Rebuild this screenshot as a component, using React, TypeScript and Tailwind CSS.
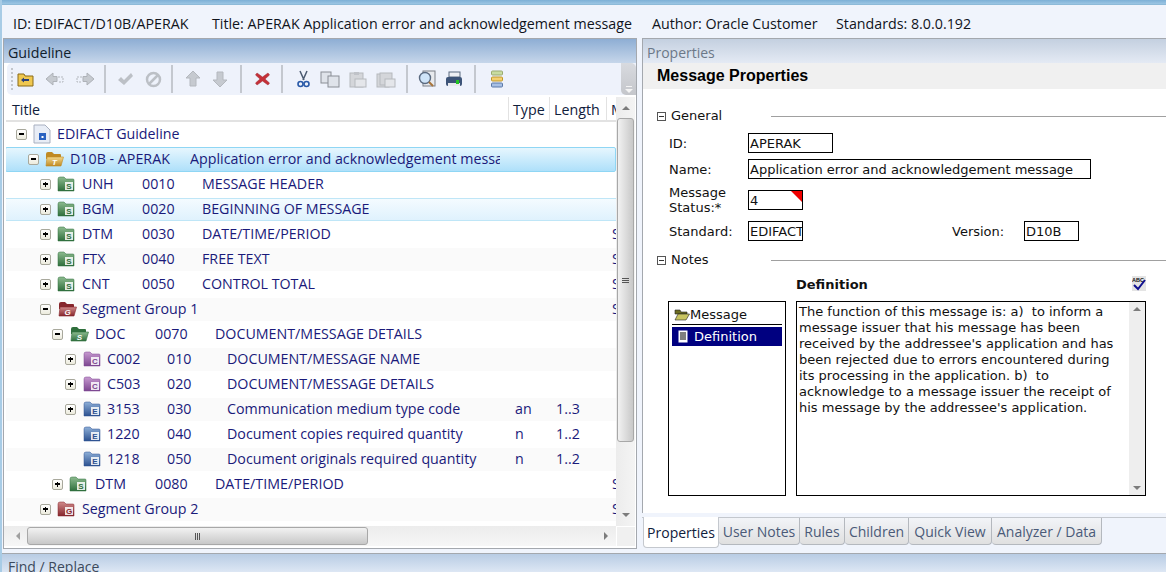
import React from 'react';

type Row = {
  level: number;
  open?: boolean;
  toggle?: boolean;
  kind: string;
  code: string;
  seq?: string;
  title?: string;
  type?: string;
  length?: string;
  min?: boolean;
};

const rows: Row[] = [
  { level: 1, toggle: true, kind: 'S', code: 'UNH', seq: '0010', title: 'MESSAGE HEADER' },
  { level: 1, toggle: true, kind: 'S', code: 'BGM', seq: '0020', title: 'BEGINNING OF MESSAGE' },
  { level: 1, toggle: true, kind: 'S', code: 'DTM', seq: '0030', title: 'DATE/TIME/PERIOD', min: true },
  { level: 1, toggle: true, kind: 'S', code: 'FTX', seq: '0040', title: 'FREE TEXT', min: true },
  { level: 1, toggle: true, kind: 'S', code: 'CNT', seq: '0050', title: 'CONTROL TOTAL', min: true },
  { level: 1, open: true, toggle: true, kind: 'G', code: 'Segment Group 1', min: true },
  { level: 2, open: true, toggle: true, kind: 'S', code: 'DOC', seq: '0070', title: 'DOCUMENT/MESSAGE DETAILS' },
  { level: 3, toggle: true, kind: 'C', code: 'C002', seq: '010', title: 'DOCUMENT/MESSAGE NAME' },
  { level: 3, toggle: true, kind: 'C', code: 'C503', seq: '020', title: 'DOCUMENT/MESSAGE DETAILS' },
  { level: 3, toggle: true, kind: 'E', code: '3153', seq: '030', title: 'Communication medium type code', type: 'an', length: '1..3' },
  { level: 3, kind: 'E', code: '1220', seq: '040', title: 'Document copies required quantity', type: 'n', length: '1..2' },
  { level: 3, kind: 'E', code: '1218', seq: '050', title: 'Document originals required quantity', type: 'n', length: '1..2' },
  { level: 2, toggle: true, kind: 'S', code: 'DTM', seq: '0080', title: 'DATE/TIME/PERIOD', min: true },
  { level: 1, toggle: true, kind: 'G', code: 'Segment Group 2', min: true },
];

const folderColors: Record<string, string[]> = {
  S: ['#8dbb8f', '#2f6f3c'],
  G: ['#d08a8a', '#86262c'],
  C: ['#c79ad0', '#7c4690'],
  E: ['#8fb0d8', '#2c5190'],
  Y: ['#f3d88c', '#c08a24'],
};

const Folder: React.FC<{ kind: string; open?: boolean }> = ({ kind, open }) => {
  const [a, b] = folderColors[kind];
  const id = `fold-${kind}-${open ? 'o' : 'c'}`;
  const grad = (
    <defs>
      <linearGradient id={id} x1="0" y1="0" x2="0" y2="1">
        <stop offset="0" stopColor={a} />
        <stop offset="1" stopColor={b} />
      </linearGradient>
    </defs>
  );
  if (open) {
    return (
      <svg width="20" height="16" viewBox="0 0 20 16">
        {grad}
        <path d="M2 3 Q2 1 4 1 H8 L10 3 H16 Q17 3 17 4 V8 H2 Z" fill={b} />
        <path d="M3 6 H19.5 L17 15 H2 Z" fill={`url(#${id})`} stroke={b} strokeWidth="0.6" />
        <text x="10.5" y="13.5" fontSize="8" fontWeight="700" fontStyle="italic" fill="#fff" textAnchor="middle" fontFamily="Liberation Sans, sans-serif">{kind === 'Y' ? 'T' : kind}</text>
      </svg>
    );
  }
  return (
    <svg width="18" height="16" viewBox="0 0 18 16">
      {grad}
      <path d="M1 3 Q1 1 3 1 H7 L9 3 H16 Q17 3 17 4 V15 H1 Z" fill={`url(#${id})`} stroke={b} strokeWidth="0.5" />
      <rect x="8" y="6" width="8" height="8" fill="#fff" opacity="0.85" />
      <text x="12" y="13" fontSize="8" fontWeight="700" fill={b} textAnchor="middle" fontFamily="Liberation Sans, sans-serif">{kind}</text>
    </svg>
  );
};

const Toggle: React.FC<{ open?: boolean }> = ({ open }) => (
  <div className="w-[11px] h-[11px] border border-[#a8a89c] rounded-[2px] bg-gradient-to-b from-white to-[#ecebdd] flex items-center justify-center relative">
    <div className="w-[5px] h-[1.5px] bg-black" />
    {!open && <div className="absolute w-[1.5px] h-[5px] bg-black" />}
  </div>
);

const Sep = () => <div className="w-[2px] h-[28px] bg-[#c4c8cf] shrink-0" />;

const Tool: React.FC<{ w: string; children: React.ReactNode }> = ({ w, children }) => (
  <div className={`${w} h-[20px] flex items-center justify-center shrink-0`}>{children}</div>
);

const Toolbar = () => (
  <div className="h-[32px] bg-[#eef2fb] flex items-center relative rounded-l-[5px] ml-[3px]">
    <div className="w-[2px] h-[22px] ml-[4px] mr-[2px] border-l-2 border-dotted border-[#c2c6cc]" />
    <Tool w="w-[21px]">
      <svg width="17" height="15" viewBox="0 0 17 15">
        <path d="M1 2 H7 L8 4 H16 V14 H1 Z" fill="#f0c850" stroke="#8a6a18" />
        <path d="M4 8 L7 5.5 V7 H12 V9 H7 V10.5 Z" fill="#2a3f78" />
      </svg>
    </Tool>
    <div className="w-[7px]" />
    <Tool w="w-[24px]">
      <svg width="20" height="14" viewBox="0 0 20 14">
        <path d="M1 7 L8 1 V4.5 H12 V9.5 H8 V13 Z" fill="#c6cad0" stroke="#aeb2b8" />
        <path d="M13 5 H18 V10 H13" fill="none" stroke="#b4b8be" strokeDasharray="2 1" />
      </svg>
    </Tool>
    <div className="w-[6px]" />
    <Tool w="w-[24px]">
      <svg width="20" height="14" viewBox="0 0 20 14">
        <path d="M19 7 L12 1 V4.5 H8 V9.5 H12 V13 Z" fill="#c6cad0" stroke="#aeb2b8" />
        <path d="M7 5 H2 V10 H7" fill="none" stroke="#b4b8be" strokeDasharray="2 1" />
      </svg>
    </Tool>
    <div className="w-[7px]" />
    <Sep />
    <div className="w-[10px]" />
    <Tool w="w-[18px]">
      <svg width="17" height="14" viewBox="0 0 17 14"><path d="M1 8 L4 5 L7 8 L14 1 L16 4 L7 13 Z" fill="#bcc0c6" /></svg>
    </Tool>
    <div className="w-[10px]" />
    <Tool w="w-[18px]">
      <svg width="17" height="17" viewBox="0 0 17 17"><circle cx="8.5" cy="8.5" r="6.5" fill="none" stroke="#bcc0c6" strokeWidth="2.5" /><path d="M4 13 L13 4" stroke="#bcc0c6" strokeWidth="2.5" /></svg>
    </Tool>
    <div className="w-[9px]" />
    <Sep />
    <div className="w-[11px]" />
    <Tool w="w-[18px]">
      <svg width="17" height="18" viewBox="0 0 17 18"><path d="M8 1 L15 8 H11 V16 H5 V8 H1 Z" fill="#c6cad0" stroke="#b4b8be" /></svg>
    </Tool>
    <div className="w-[9px]" />
    <Tool w="w-[18px]">
      <svg width="17" height="18" viewBox="0 0 17 18"><path d="M8 17 L15 10 H11 V2 H5 V10 H1 Z" fill="#c6cad0" stroke="#b4b8be" /></svg>
    </Tool>
    <div className="w-[11px]" />
    <Sep />
    <div className="w-[12px]" />
    <Tool w="w-[16px]">
      <svg width="15" height="14" viewBox="0 0 15 14"><path d="M2 1 L7.5 5 L13 1 L14.5 3 L10 7 L14.5 11 L13 13 L7.5 9 L2 13 L0.5 11 L5 7 L0.5 3 Z" fill="#c43038" stroke="#a02a30" strokeWidth="0.5" /></svg>
    </Tool>
    <div className="w-[11px]" />
    <Sep />
    <div className="w-[12px]" />
    <Tool w="w-[16px]">
      <svg width="13" height="18" viewBox="0 0 13 18">
        <path d="M3 1 L7 10 M10 1 L6 10" stroke="#4a5a70" strokeWidth="1.5" />
        <circle cx="3.5" cy="14" r="2.5" fill="none" stroke="#2a5aa8" strokeWidth="1.6" />
        <circle cx="9.5" cy="14" r="2.5" fill="none" stroke="#2a5aa8" strokeWidth="1.6" />
      </svg>
    </Tool>
    <div className="w-[9px]" />
    <Tool w="w-[20px]">
      <svg width="20" height="17" viewBox="0 0 20 17">
        <rect x="1" y="1" width="10" height="11" fill="#dfe3ea" stroke="#8a8e96" />
        <rect x="8" y="5" width="11" height="11" fill="#dfe3ea" stroke="#8a8e96" />
      </svg>
    </Tool>
    <div className="w-[9px]" />
    <Tool w="w-[18px]">
      <svg width="18" height="17" viewBox="0 0 18 17">
        <rect x="1" y="2" width="13" height="14" fill="#d4d6da" stroke="#b6b9be" />
        <rect x="5" y="1" width="5" height="3" fill="#bfc2c8" />
        <rect x="6" y="8" width="11" height="8" fill="#e4e6ea" stroke="#b6b9be" />
      </svg>
    </Tool>
    <div className="w-[9px]" />
    <Tool w="w-[20px]">
      <svg width="20" height="17" viewBox="0 0 20 17">
        <rect x="1" y="3" width="12" height="13" fill="#d4d6da" stroke="#b6b9be" />
        <rect x="4" y="2" width="12" height="12" fill="#d4d6da" stroke="#b6b9be" />
        <rect x="9" y="8" width="10" height="8" fill="#e4e6ea" stroke="#b6b9be" />
      </svg>
    </Tool>
    <div className="w-[10px]" />
    <Sep />
    <div className="w-[10px]" />
    <Tool w="w-[19px]">
      <svg width="19" height="18" viewBox="0 0 19 18">
        <rect x="5" y="1" width="12" height="15" fill="#e8eaee" stroke="#7a7e86" />
        <circle cx="7" cy="8" r="5.5" fill="#cfe4f8" stroke="#5a6a80" strokeWidth="1.4" />
        <path d="M11 12 L15 16" stroke="#a8743a" strokeWidth="2" />
      </svg>
    </Tool>
    <div className="w-[7px]" />
    <Tool w="w-[19px]">
      <svg width="18" height="17" viewBox="0 0 18 17">
        <rect x="4" y="1" width="11" height="5" fill="#eef0f4" stroke="#5a6a80" />
        <rect x="1" y="6" width="16" height="9" rx="2" fill="#3d5478" />
        <rect x="3" y="12" width="12" height="3" fill="#e8eaee" />
        <rect x="11" y="9" width="3" height="4" fill="#22c422" />
      </svg>
    </Tool>
    <div className="w-[11px]" />
    <Sep />
    <div className="w-[11px]" />
    <Tool w="w-[19px]">
      <svg width="12" height="19" viewBox="0 0 12 19">
        <rect x="0.5" y="1" width="11" height="4" rx="1" fill="#c8dca0" stroke="#9aaa70" />
        <rect x="0.5" y="7" width="11" height="4" rx="1" fill="#f4d070" stroke="#c09828" />
        <rect x="0.5" y="13" width="11" height="4" rx="1" fill="#a8c0e4" stroke="#5a78a8" />
      </svg>
    </Tool>
    <div className="absolute right-0 top-0 w-[15px] h-[32px] bg-gradient-to-b from-[#d8dadf] to-[#c4c6cb] rounded-tr-[5px] rounded-bl-[5px] flex flex-col items-center justify-end pb-[2px]">
      <div className="w-[6px] h-[1px] bg-[#f4f4f4] mb-[2px]" />
      <div className="w-0 h-0 border-l-[4px] border-r-[4px] border-t-[4px] border-l-transparent border-r-transparent border-t-[#f4f4f4]" />
    </div>
  </div>
);

const Arrow: React.FC<{ dir: 'up' | 'down' | 'left' | 'right' }> = ({ dir }) => {
  if (dir === 'up') return <div className="w-0 h-0 border-l-[4px] border-r-[4px] border-b-[4px] border-l-transparent border-r-transparent border-b-[#7c7c7c]" />;
  if (dir === 'down') return <div className="w-0 h-0 border-l-[4px] border-r-[4px] border-t-[4px] border-l-transparent border-r-transparent border-t-[#7c7c7c]" />;
  if (dir === 'left') return <div className="w-0 h-0 border-t-[4px] border-b-[4px] border-r-[4px] border-t-transparent border-b-transparent border-r-[#a0a0a0]" />;
  return <div className="w-0 h-0 border-t-[4px] border-b-[4px] border-l-[4px] border-t-transparent border-b-transparent border-l-[#7c7c7c]" />;
};

const TreeRow: React.FC<{ row: Row; index: number }> = ({ row, index }) => {
  const pad = row.level === 1 ? 'pl-[34px]' : row.level === 2 ? 'pl-[46px]' : 'pl-[59px]';
  const toggleSlot = row.level === 3 ? 'w-[18px]' : 'w-[17px]';
  const iconSlot = row.level === 1 ? 'w-[25px]' : row.level === 2 ? 'w-[26px]' : 'w-[24px]';
  // the BGM row is hovered, the rest alternate
  const bg = row.code === 'BGM' ? 'bg-gradient-to-b from-[#f4fbff] to-[#dff2fd] border-y border-[#bfe6f7]' : index % 2 === 1 ? 'bg-[#fafafa]' : '';
  return (
    <div className="h-[25px] flex items-center">
      <div className={`h-[23px] w-full flex items-center pb-[1px] text-[#1a1a7a] ${pad} ${bg}`}>
        <div className={`${toggleSlot} shrink-0`}>{row.toggle && <Toggle open={row.open} />}</div>
        <div className={`${iconSlot} shrink-0`}>
          <Folder kind={row.kind} open={row.open} />
        </div>
        {row.seq ? (
          <>
            <div className="w-[60px] shrink-0">{row.code}</div>
            <div className="w-[60px] shrink-0">{row.seq}</div>
            <div className="flex-1 min-w-0 whitespace-nowrap overflow-hidden">{row.title}</div>
          </>
        ) : (
          <div className="flex-1 min-w-0 whitespace-nowrap">{row.code}</div>
        )}
        <div className="w-[42px] shrink-0 pl-[6px]">{row.type}</div>
        <div className="w-[55px] shrink-0 pl-[5px]">{row.length}</div>
        <div className="w-[10px] shrink-0 pl-[6px] overflow-hidden">{row.min && 'S'}</div>
      </div>
    </div>
  );
};

const Guideline = () => (
  <div className="w-[634px] h-[511px] border border-[#a4a8ae] flex flex-col bg-white shrink-0 font-['Open_Sans',sans-serif] text-[14.25px]">
    <div className="h-[24px] bg-gradient-to-b from-[#8eaed4] to-[#c6d6ea] text-[#10202c] flex items-center pl-[4px] pt-[3px] shrink-0">Guideline</div>
    <Toolbar />
    <div className="flex-1 min-h-0 flex pt-[2px] pl-[2px]">
      <div className="flex-1 min-w-0 flex flex-col">
        <div className="h-[25px] border-b-2 border-[#e2e2e2] flex items-center text-[#10203c] shrink-0">
          <div className="flex-1 pl-[6px] pt-[2px]">Title</div>
          <div className="w-[41px] h-full border-l border-[#e2e2e2] pl-[4px] pt-[2px] flex items-center">Type</div>
          <div className="w-[57px] h-full border-l border-[#e2e2e2] pl-[4px] pt-[2px] flex items-center">Length</div>
          <div className="w-[10px] h-full border-l border-[#e2e2e2] pl-[4px] pt-[2px] overflow-hidden flex items-center">M</div>
        </div>
        <div className="flex-1 min-h-0 overflow-hidden">
          <div className="h-[25px] flex items-center pl-[10px] pb-[1px] text-[#1a1a7a]">
            <div className="w-[17px] shrink-0"><Toggle open /></div>
            <svg className="shrink-0 mr-[6px]" width="18" height="20" viewBox="0 0 18 20">
              <path d="M1 1 H12 L17 6 V19 H1 Z" fill="#e8edf6" stroke="#a8b0c0" />
              <rect x="6" y="9" width="7" height="7" fill="#2a62c0" />
              <rect x="8.5" y="12" width="2" height="2" fill="#fff" />
            </svg>
            <span>EDIFACT Guideline</span>
          </div>
          <div className="h-[25px] flex items-center pl-[22px] pb-[1px] text-[#1a1a7a] bg-gradient-to-b from-[#e6f6fe] to-[#aee0fa] border border-[#8fd6f4] -ml-[1px] rounded-[2px]">
            <div className="w-[16px] shrink-0"><Toggle open /></div>
            <div className="w-[26px] shrink-0"><Folder kind="Y" open /></div>
            <div className="w-[120px] shrink-0 whitespace-nowrap">D10B - APERAK</div>
            <div className="w-[310px] shrink-0 whitespace-nowrap overflow-hidden">Application error and acknowledgement message</div>
          </div>
          {rows.map((row, i) => (
            <TreeRow key={`${row.code}-${i}`} row={row} index={i} />
          ))}
        </div>
      </div>
      <div className="w-[19px] mr-[1px] shrink-0 bg-gradient-to-r from-[#ececec] to-[#f4f4f4] flex flex-col items-center">
        <div className="h-[21px] shrink-0 flex items-center justify-center"><Arrow dir="up" /></div>
        <div className="w-[17px] h-[324px] shrink-0 rounded-[3px] border border-[#a8a8a8] bg-gradient-to-r from-[#f2f2f2] to-[#c8c8c8] flex flex-col items-center justify-center gap-[1px]">
          <div className="w-[7px] h-[1px] bg-[#555]" />
          <div className="w-[7px] h-[1px] bg-[#555]" />
          <div className="w-[7px] h-[1px] bg-[#555]" />
        </div>
        <div className="flex-1 flex items-end pb-[9px]"><Arrow dir="down" /></div>
      </div>
    </div>
    <div className="h-[20px] flex shrink-0 mb-[2px] mr-[1px]">
      <div className="flex-1 bg-gradient-to-b from-[#ececec] to-[#f6f6f6] flex items-center">
        <div className="w-[23px] shrink-0 flex justify-center pl-[4px]"><Arrow dir="left" /></div>
        <div className="w-[341px] h-[18px] rounded-[3px] border border-[#a8a8a8] bg-gradient-to-b from-[#f2f2f2] to-[#c8c8c8] flex items-center justify-center gap-[1px]">
          <div className="w-[1px] h-[7px] bg-[#555]" />
          <div className="w-[1px] h-[7px] bg-[#555]" />
          <div className="w-[1px] h-[7px] bg-[#555]" />
        </div>
        <div className="flex-1 flex justify-end pr-[8px]"><Arrow dir="right" /></div>
      </div>
      <div className="w-[19px] bg-[#f0f0f0] border-l border-t border-white" />
    </div>
  </div>
);

const Field: React.FC<{ w: string; children: React.ReactNode }> = ({ w, children }) => (
  <div className={`${w} h-[20px] border border-black flex items-center pl-[1px] pt-[1px] overflow-hidden whitespace-nowrap relative bg-white shrink-0`}>{children}</div>
);

const Section: React.FC<{ title: string }> = ({ title }) => (
  <div className="flex items-center h-[16px] pl-[14px]">
    <div className="w-[9px] h-[9px] border border-[#555] flex items-center justify-center shrink-0">
      <div className="w-[5px] h-[1px] bg-[#333]" />
    </div>
    <div className="w-[105px] shrink-0 pl-[5px]">{title}</div>
    <div className="flex-1 h-[1px] bg-[#a0a0a0]" />
  </div>
);

const tabs = [
  { label: 'User Notes', w: 'w-[81px]' },
  { label: 'Rules', w: 'w-[45px]' },
  { label: 'Children', w: 'w-[64px]' },
  { label: 'Quick View', w: 'w-[83px]' },
  { label: 'Analyzer / Data', w: 'w-[110px]' },
];

const definition = [
  'The function of this message is: a)  to inform a',
  'message issuer that his message has been',
  "received by the addressee's application and has",
  'been rejected due to errors encountered during',
  'its processing in the application. b)  to',
  'acknowledge to a message issuer the receipt of',
  "his message by the addressee's application.",
];

const Properties = () => (
  <div className="flex-1 min-w-0 h-[514px] flex flex-col">
    <div className="flex-1 min-h-0 flex flex-col bg-white border border-[#a4a8ae] border-r-0 font-['DejaVu_Sans',sans-serif] text-[13px] text-[#111]">
      <div className="h-[24px] bg-gradient-to-b from-[#c4d0e0] to-[#e4eaf4] text-[#6c7888] flex items-center pl-[4px] pt-[2px] shrink-0 font-['Open_Sans',sans-serif] text-[14px]">Properties</div>
      <div className="h-[26px] bg-[#f0f0f0] flex items-center pl-[14px] shrink-0 font-['Liberation_Sans',sans-serif] font-bold text-[16px] text-black">Message Properties</div>
      <div className="pt-[19px]">
        <Section title="General" />
        <div className="pl-[26px] pt-[9px] flex flex-col">
          <div className="flex items-center h-[20px]"><div className="w-[79px] leading-[20px] pt-[1px]">ID:</div><Field w="w-[85px]">APERAK</Field></div>
          <div className="flex items-center h-[20px] mt-[6px]"><div className="w-[79px] leading-[20px] pt-[1px]">Name:</div><Field w="w-[343px]">Application error and acknowledgement message</Field></div>
          <div className="flex items-center mt-[7px] h-[30px]">
            <div className="w-[79px] leading-[15px] pb-[2px]">Message Status:*</div>
            <div className="self-start mt-[4px]">
              <Field w="w-[55px]">
                4
                <div className="absolute right-0 top-0 w-0 h-0 border-l-[11px] border-t-[11px] border-l-transparent border-t-[#f00000]" />
              </Field>
            </div>
          </div>
          <div className="flex items-center h-[20px] mt-[5px]">
            <div className="w-[79px] leading-[20px] pt-[1px]">Standard:</div>
            <Field w="w-[55px]">EDIFACT</Field>
            <div className="w-[149px]" />
            <div className="w-[72px] leading-[20px] pt-[1px]">Version:</div>
            <Field w="w-[55px]">D10B</Field>
          </div>
        </div>
        <div className="mt-[11px]"><Section title="Notes" /></div>
        <div className="pl-[25px] flex">
          <div className="w-[128px] shrink-0" />
          <div className="w-[350px] h-[33px] flex items-center justify-between font-bold">
            <span>Definition</span>
            <svg className="mb-[2px]" width="14" height="15" viewBox="0 0 14 15">
              <rect x="0" y="0" width="14" height="15" fill="#e4e4e4" />
              <text x="6" y="6" fontSize="5.5" fontWeight="700" textAnchor="middle" fill="#111" fontFamily="Liberation Sans, sans-serif">ABC</text>
              <path d="M2 9 L6 13 L13 4" fill="none" stroke="#101090" strokeWidth="2" />
            </svg>
          </div>
        </div>
        <div className="pl-[25px] flex">
          <div className="w-[118px] h-[195px] border border-black shrink-0 px-[3px] pt-[3px]">
            <div className="flex items-center h-[20px] pl-[2px] pt-[1px] border-b border-black">
              <svg width="16" height="12" viewBox="0 0 16 12">
                <path d="M1 1 H6 L7 3 H13 V5 H1 Z" fill="#6c6c20" stroke="#222" strokeWidth="0.6" />
                <path d="M1 11 L4 5 H15.5 L12 11 Z" fill="#c8c460" stroke="#222" strokeWidth="0.6" />
              </svg>
              <span>Message</span>
            </div>
            <div className="h-[19px] mt-[2px] bg-[#000080] text-white flex items-center pl-[6px] gap-[6px]">
              <svg width="10" height="13" viewBox="0 0 10 13">
                <rect x="0.5" y="0.5" width="9" height="12" fill="#fff" />
                <path d="M2 3 H8 M2 5 H8 M2 7 H8 M2 9 H8" stroke="#000" />
              </svg>
              <span>Definition</span>
            </div>
          </div>
          <div className="w-[350px] h-[195px] border border-black ml-[10px] flex">
            <div className="flex-1 min-w-0 pl-[2px] pt-[2px] leading-[16px] whitespace-pre">
              {definition.map((line) => (
                <div key={line}>{line}</div>
              ))}
            </div>
            <div className="w-[16px] shrink-0 bg-[#eeeeee] flex flex-col items-center justify-between py-[5px]">
              <Arrow dir="up" />
              <Arrow dir="down" />
            </div>
          </div>
        </div>
      </div>
    </div>
  </div>
);

const TabStrip = () => (
  <div className="h-[40px] bg-[#f0f4fc] font-['Open_Sans',sans-serif] text-[14px] pt-[4px] shrink-0">
    <div className="border-t border-[#c4c8ce] flex pl-[1px] h-[30px]">
      <div className="w-[76px] h-[31px] -mt-[1px] pt-[1px] bg-white rounded-b-[4px] border border-t-0 border-[#c4c8ce] flex items-center justify-center text-[#10203c]">Properties</div>
      {tabs.map((t) => (
        <div key={t.label} className={`${t.w} h-[27px] pt-[1px] bg-gradient-to-b from-[#f2f4f8] to-[#e0e0e0] rounded-b-[4px] border border-t-0 border-l-0 border-[#b4b8be] flex items-center justify-center text-[#4a5a78] whitespace-nowrap`}>{t.label}</div>
      ))}
    </div>
  </div>
);

const App: React.FC = () => (
  <div className="w-[1166px] h-[572px] overflow-hidden bg-[#f0f4fc] flex flex-col border-l-2 border-[#a8cce6]">
    <div className="h-[5px] bg-gradient-to-b from-[#7db0d6] to-[#9cc6e4] border-b border-[#8dbad8] shrink-0" />
    <div className="h-[33px] pl-[11px] pt-[4px] flex items-center text-[14.25px] text-[#10141c] font-['Open_Sans',sans-serif] shrink-0 whitespace-nowrap">
      <span className="w-[199px] shrink-0">ID: EDIFACT/D10B/APERAK</span>
      <span className="w-[440px] shrink-0">Title: APERAK Application error and acknowledgement message</span>
      <span className="w-[184px] shrink-0">Author: Oracle Customer</span>
      <span>Standards: 8.0.0.192</span>
    </div>
    <div className="h-[515px] flex pl-[1px] gap-[5px] shrink-0">
      <Guideline />
      <div className="flex-1 min-w-0 flex flex-col">
        <Properties />
        <div className="-mt-[1px]"><TabStrip /></div>
      </div>
    </div>
    <div className="flex-1 min-h-0 bg-gradient-to-b from-[#b8cce4] to-[#dde7f4] text-[#3c4a5c] font-['Open_Sans',sans-serif] text-[14px] pl-[6px] pt-[2px] whitespace-nowrap border-t border-[#a4a8ae]">Find / Replace</div>
  </div>
);

export default App;
